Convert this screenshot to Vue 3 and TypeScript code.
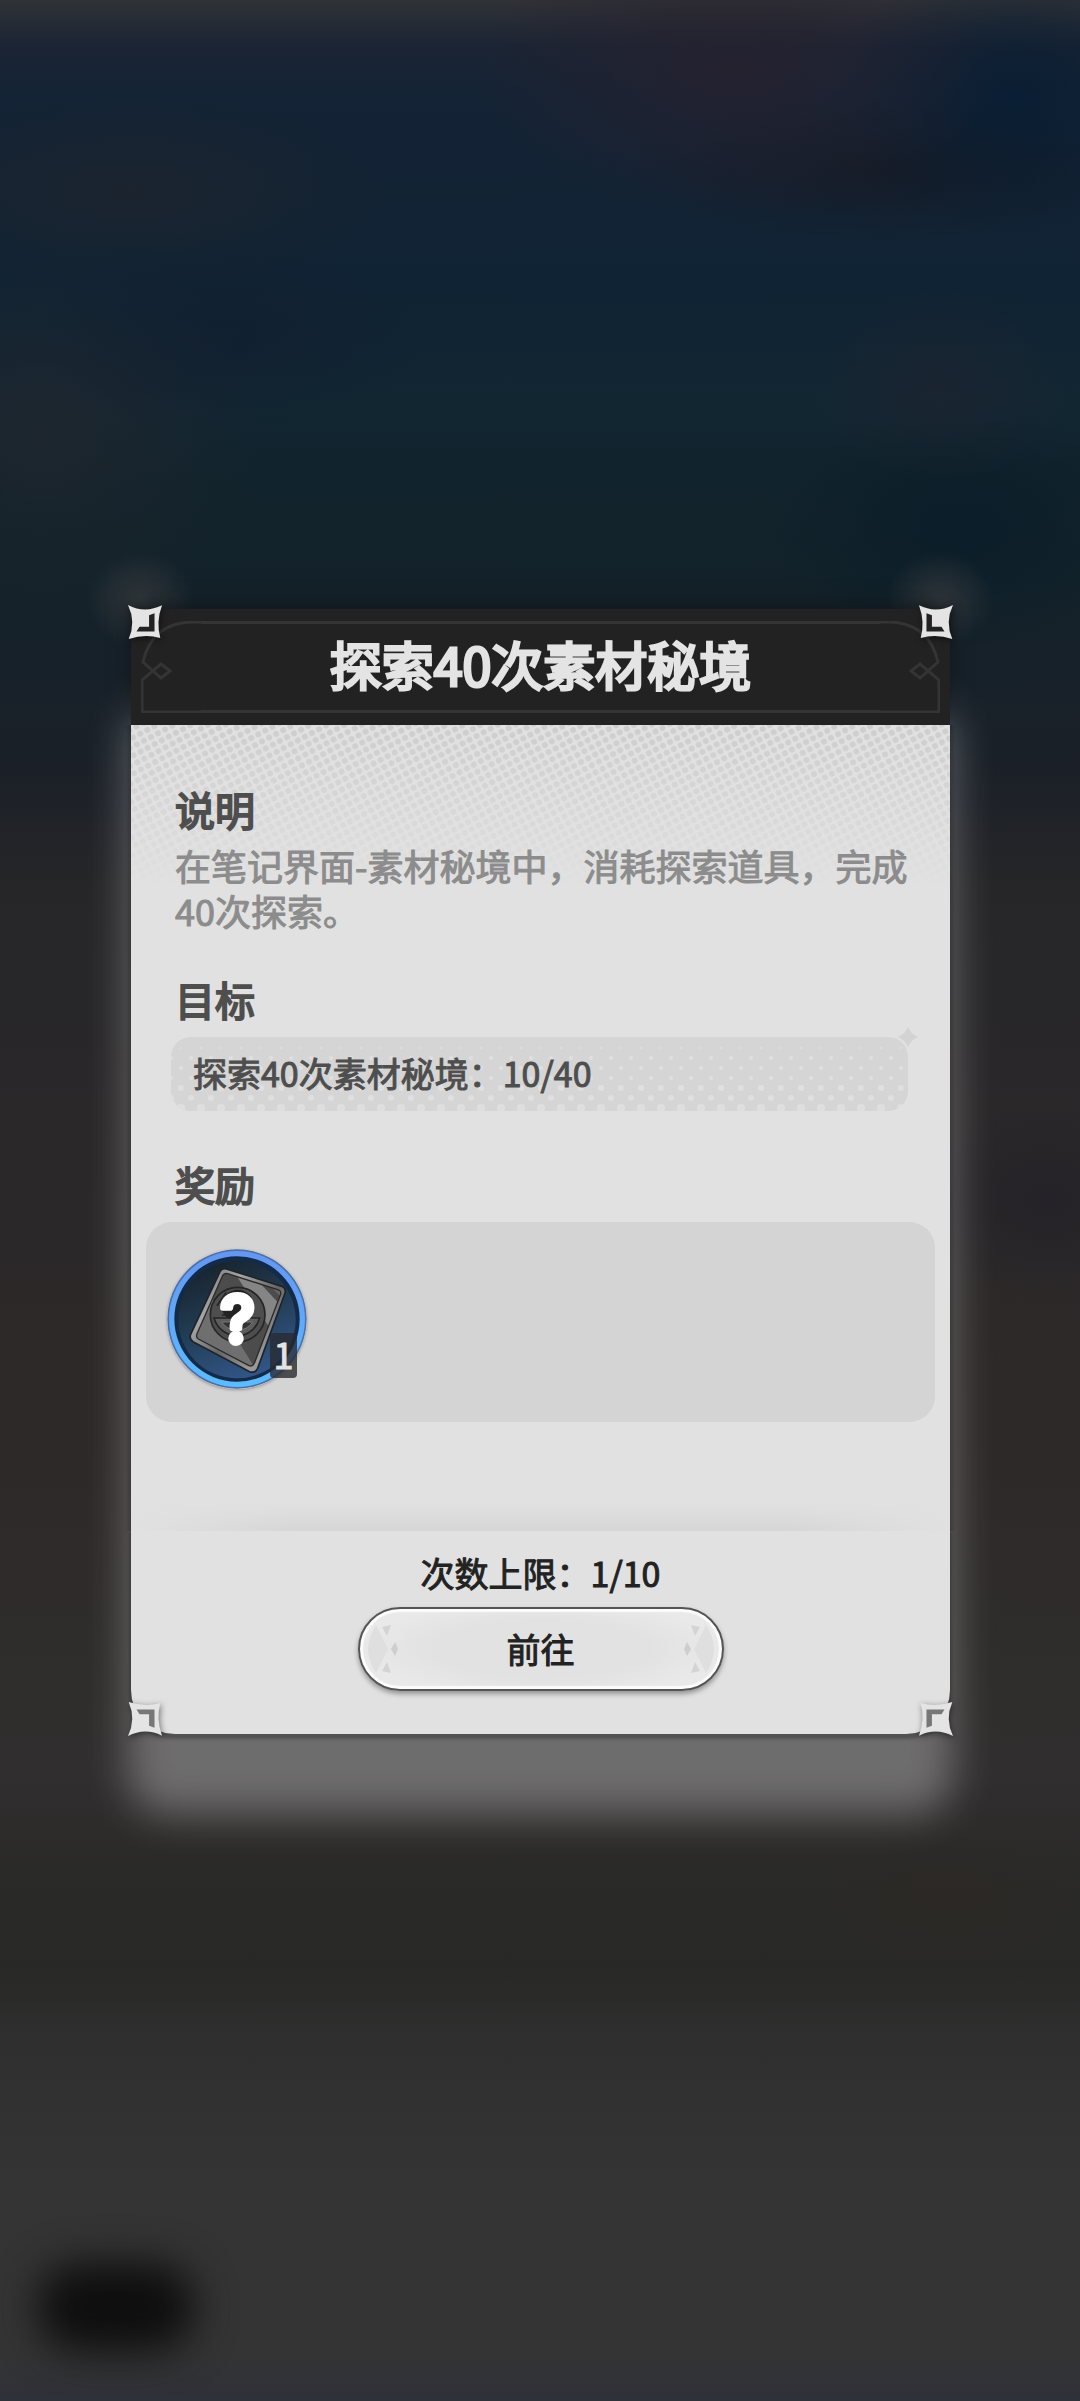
<script setup lang="ts">
interface Corner {
  id: string
  flip: string
}

const corners: Corner[] = [
  { id: 'top-left', flip: '' },
  { id: 'top-right', flip: 'translate(100 0) scale(-1 1)' },
  { id: 'bottom-left', flip: 'translate(0 100) scale(1 -1)' },
  { id: 'bottom-right', flip: 'translate(100 100) scale(-1 -1)' },
]

const task = {
  title: '探索40次素材秘境',
  description: '在笔记界面-素材秘境中，消耗探索道具，完成40次探索。',
  progress: '探索40次素材秘境：10/40',
  limit: '次数上限：1/10',
  rewardCount: 1,
}

// Rows of the goal bar's dots; they grow toward the bottom edge.
const dotRows = [1, 2, 2, 2, 3, 3, 4].map((radius, index) => ({
  id: `goal-dots-${index}`,
  y: 6 + index * 10,
  shift: index % 2 === 0 ? 0 : 10,
  radius,
}))
</script>

<template>
  <main class="screen">
    <div class="backdrop" aria-hidden="true"><i class="pill"></i></div>
    <section class="dialog" aria-labelledby="task-title">
      <div class="glow" aria-hidden="true"></div>
      <header class="header">
        <div class="frame" aria-hidden="true">
          <svg class="frame-end" viewBox="0 0 60 92">
            <path d="M60 1H53C24 1 8 15 2 41L20 57L29 50L20 43L1 59V91H60" />
          </svg>
          <div class="frame-line"></div>
          <svg class="frame-end mirrored" viewBox="0 0 60 92">
            <path d="M60 1H53C24 1 8 15 2 41L20 57L29 50L20 43L1 59V91H60" />
          </svg>
        </div>
        <h1 id="task-title">{{ task.title }}</h1>
      </header>

      <div class="body">
        <svg class="halftone" aria-hidden="true">
          <defs>
            <pattern id="halftone-dots" width="8" height="8" patternUnits="userSpaceOnUse" patternTransform="rotate(-28)">
              <circle cx="4" cy="4" r="3" fill="#cdcdcd" />
            </pattern>
          </defs>
          <rect width="100%" height="100%" fill="url(#halftone-dots)" />
        </svg>

        <section class="block about">
          <h2>说明</h2>
          <p>{{ task.description }}</p>
        </section>

        <section class="block goal">
          <h2>目标</h2>
          <div class="goal-bar">
            <svg class="goal-dots" aria-hidden="true">
              <defs>
                <pattern
                  v-for="row in dotRows"
                  :id="row.id"
                  :key="row.id"
                  :x="row.shift"
                  :y="row.y"
                  width="20"
                  height="10"
                  patternUnits="userSpaceOnUse"
                >
                  <circle cx="10" cy="5" :r="row.radius" fill="#dfdfdf" />
                </pattern>
              </defs>
              <rect
                v-for="row in dotRows"
                :key="row.id"
                :y="row.y"
                width="100%"
                height="10"
                :fill="`url(#${row.id})`"
              />
            </svg>
            <span>{{ task.progress }}</span>
            <svg class="sparkle" viewBox="0 0 20 20" aria-hidden="true">
              <path d="M10 0Q13 7 20 10Q13 13 10 20Q7 13 0 10Q7 7 10 0Z" fill="#d3d3d3" />
            </svg>
          </div>
        </section>

        <section class="block reward">
          <h2>奖励</h2>
          <div class="reward-tray">
            <div class="item">
              <svg viewBox="0 0 420 420" role="img" aria-label="随机卡牌">
                <defs>
                  <linearGradient id="ring" x1="0" y1="0" x2="0" y2="1">
                    <stop offset="0" stop-color="#6496f2" />
                    <stop offset="1" stop-color="#5bbcff" />
                  </linearGradient>
                  <linearGradient id="disc" x1="0.2" y1="0" x2="0.6" y2="1">
                    <stop offset="0" stop-color="#17222b" />
                    <stop offset="0.45" stop-color="#213a50" />
                    <stop offset="1" stop-color="#315687" />
                  </linearGradient>
                  <linearGradient id="rim" x1="0" y1="0" x2="1" y2="1">
                    <stop offset="0" stop-color="#6b6b6b" />
                    <stop offset="0.3" stop-color="#a5a5a5" />
                    <stop offset="0.55" stop-color="#666" />
                    <stop offset="0.8" stop-color="#9a9a9a" />
                    <stop offset="1" stop-color="#777" />
                  </linearGradient>
                  <clipPath id="face">
                    <path d="M182 74L336 123Q343 127 341 136L262 343Q257 354 246 350L94 270Q86 265 90 254L166 82Q171 71 182 74Z" />
                  </clipPath>
                </defs>
                <circle cx="210" cy="210" r="209" fill="#4d6fa8" />
                <circle cx="210" cy="210" r="204" fill="url(#ring)" />
                <circle cx="210" cy="210" r="188" fill="#132a49" />
                <circle cx="210" cy="212" r="176" fill="url(#disc)" />
                <path
                  d="M178 60L345 112Q358 118 354 132L272 358Q264 374 248 368L78 278Q66 270 71 256L158 70Q165 56 178 60Z"
                  fill="url(#rim)"
                  stroke="#20242a"
                  stroke-width="5"
                />
                <g clip-path="url(#face)">
                  <path d="M0 0H420V420H0Z" fill="#4c4c4c" />
                  <path d="M196 60L240 60L360 190L310 240Z" fill="#858585" />
                  <path d="M250 60L360 110L350 150Z" fill="#666" />
                  <path d="M60 270L130 140L290 400H230Z" fill="#6f6f6f" />
                  <path d="M60 220L110 300L230 400L150 390Z" fill="#454545" />
                </g>
                <path
                  d="M182 74L336 123Q343 127 341 136L262 343Q257 354 246 350L94 270Q86 265 90 254L166 82Q171 71 182 74Z"
                  fill="none"
                  stroke="#2b2b2b"
                  stroke-width="4"
                />
                <circle cx="212" cy="197" r="82" fill="#4e4e4e" stroke="#262626" stroke-width="5" />
                <circle cx="212" cy="170" r="48" fill="#222" />
                <path d="M141 207H278Q262 258 208 262Q154 252 141 207Z" fill="#5d5d5d" stroke="#262626" stroke-width="5" />
                <path d="M164 219H257Q242 243 209 245Q178 241 164 219Z" fill="#333" stroke="#777" stroke-width="3" />
                <path d="M150 170L178 130M165 185H190M165 198H186" stroke="#262626" stroke-width="5" fill="none" />
                <text class="mystery" x="212" y="281" text-anchor="middle">?</text>
              </svg>
              <span class="count">{{ task.rewardCount }}</span>
            </div>
          </div>
        </section>
        <div class="fold" aria-hidden="true"></div>
      </div>

      <footer class="footer">
        <p>{{ task.limit }}</p>
        <button type="button" class="go">
          <svg class="cross" viewBox="0 0 40 60" aria-hidden="true">
            <path d="M10 6L22 30L10 54Q-6 30 10 6Z" fill="#dfdfdf" />
            <path d="M16 8L25 6L21 17ZM16 52L25 54L21 43Z" fill="#d4d4d4" />
            <path d="M25 30L29 23L32 30L29 37Z" fill="#cecece" />
          </svg>
          <span>前往</span>
          <svg class="cross mirrored" viewBox="0 0 40 60" aria-hidden="true">
            <path d="M10 6L22 30L10 54Q-6 30 10 6Z" fill="#dfdfdf" />
            <path d="M16 8L25 6L21 17ZM16 52L25 54L21 43Z" fill="#d4d4d4" />
            <path d="M25 30L29 23L32 30L29 37Z" fill="#cecece" />
          </svg>
        </button>
      </footer>

      <svg
        v-for="corner in corners"
        :key="corner.id"
        class="corner"
        :class="corner.id"
        viewBox="0 0 100 100"
        aria-hidden="true"
      >
        <g :transform="corner.flip">
          <path d="M0 0Q50 26 100 1Q82 50 95 97Q50 84 2 100Q24 50 0 0Z" fill="#e4e4e4" />
          <path class="notch" d="M78 24V78H25L34 64H62V30Z" />
        </g>
      </svg>
    </section>
  </main>
</template>

<style>
body {
  margin: 0;
  background: #333;
}
</style>

<style scoped>
.screen {
  position: relative;
  display: flex;
  align-items: center;
  box-sizing: border-box;
  min-height: 100vh;
  padding: 0 130px 58px 131px;
  overflow: hidden;
  font-family: "Noto Sans CJK SC", "Noto Sans", sans-serif;
  font-weight: 400;
}

.backdrop {
  position: absolute;
  inset: 0;
  background:
    radial-gradient(ellipse 5% 2% at 13% 25%, rgba(62, 64, 66, 0.7), transparent),
    radial-gradient(ellipse 5% 2% at 87% 25%, rgba(62, 64, 66, 0.7), transparent),
    radial-gradient(ellipse 24% 6% at 68% 3%, rgba(40, 33, 46, 0.8), transparent),
    radial-gradient(ellipse 16% 6% at 94% 4%, rgba(6, 28, 50, 0.7), transparent),
    radial-gradient(ellipse 24% 3% at 82% 7%, rgba(22, 25, 35, 0.8), transparent),
    radial-gradient(ellipse 24% 4% at 12% 8%, rgba(31, 36, 44, 0.7), transparent),
    radial-gradient(ellipse 18% 4% at 21% 14%, rgba(18, 29, 46, 0.6), transparent),
    radial-gradient(ellipse 12% 4% at 87% 16%, rgba(32, 36, 48, 0.6), transparent),
    radial-gradient(ellipse 18% 5% at 89% 22%, rgba(9, 28, 40, 0.8), transparent),
    radial-gradient(ellipse 20% 8% at 4% 18%, rgba(32, 38, 46, 0.8), transparent),
    radial-gradient(ellipse 12% 4% at 97% 50%, rgba(34, 32, 40, 0.7), transparent),
    radial-gradient(ellipse 12% 3% at 88% 79%, rgba(46, 40, 34, 0.6), transparent),
    linear-gradient(
      #303236 0,
      #1a2434 2%,
      #142335 4%,
      #102334 12%,
      #122632 17%,
      #11232c 20%,
      #13222a 24%,
      #1b2028 32%,
      #262628 37%,
      #2b2829 50%,
      #2e2929 60%,
      #302e2e 74%,
      #292928 79%,
      #282827 82%,
      #302f2f 85%,
      #343434 91%,
      #343434 98%,
      #2e3138 100%
    );
}

.pill {
  position: absolute;
  left: 38px;
  bottom: 50px;
  width: 156px;
  height: 88px;
  border-radius: 40px;
  background: #0e0e0e;
  filter: blur(20px);
}

.dialog {
  position: relative;
  flex: 1;
  min-width: 0;
}

.glow {
  position: absolute;
  inset: 90px -4px -80px;
  border-radius: 40px;
  background: rgba(255, 255, 255, 0.3);
  filter: blur(20px);
}

.header {
  position: relative;
  display: flex;
  align-items: center;
  justify-content: center;
  height: 116px;
  box-sizing: border-box;
  padding-bottom: 6px;
  background: #222;
  box-shadow: 0 -4px 18px rgba(14, 16, 18, 0.6);
}

.frame {
  position: absolute;
  inset: 12px 10px;
  display: flex;
}

.frame-end {
  width: 60px;
  height: 92px;
  fill: none;
  stroke: #343434;
  stroke-width: 3;
}

.frame-line {
  flex: 1;
  height: 92px;
  box-sizing: border-box;
  border-top: 3px solid #343434;
  border-bottom: 3px solid #343434;
}

.mirrored {
  transform: scaleX(-1);
}

h1,
h2,
p {
  margin: 0;
}

h1 {
  position: relative;
  color: #e4e4e4;
  font-size: 52px;
  font-weight: 400;
  line-height: 76px;
  -webkit-text-stroke: 3px #e4e4e4;
}

.body {
  position: relative;
  padding-top: 60px;
  background: #e1e1e1;
  box-shadow: 0 0 3px 3px rgba(20, 20, 20, 0.3);
  clip-path: inset(0 -8px);
}

.halftone {
  position: absolute;
  top: 0;
  left: 0;
  width: 100%;
  height: 160px;
  mask-image: linear-gradient(#000, transparent);
}

.block {
  position: relative;
}

h2 {
  padding-left: 44px;
  color: #4e4e4e;
  font-size: 40px;
  font-weight: 400;
  line-height: 48px;
  -webkit-text-stroke: 2px #4e4e4e;
}

.about p {
  padding: 10px 40px 0 44px;
  color: #8c8c8c;
  font-size: 36px;
  line-height: 45px;
  -webkit-text-stroke: 1px #8c8c8c;
}

.goal {
  margin-top: 42px;
}

.goal-bar {
  position: relative;
  display: flex;
  align-items: center;
  height: 74px;
  box-sizing: border-box;
  margin: 14px 42px 0 40px;
  padding: 0 22px 4px;
  border-radius: 20px;
  background: #d5d5d5;
  color: #4e4e4e;
  font-size: 34px;
  -webkit-text-stroke: 1px #4e4e4e;
}

.goal-bar span {
  position: relative;
}

.goal-dots {
  position: absolute;
  top: 0;
  left: 0;
  width: 100%;
  height: 100%;
  border-radius: 20px;
}

.sparkle {
  position: absolute;
  top: -10px;
  right: -10px;
  width: 20px;
  height: 20px;
}

.reward {
  margin-top: 49px;
}

.reward-tray {
  display: flex;
  height: 200px;
  box-sizing: border-box;
  margin: 14px 15px 0;
  padding: 27px 21px;
  border-radius: 26px;
  background: #d4d4d4;
}

.item {
  position: relative;
  width: 140px;
  height: 140px;
}

.item svg {
  display: block;
  border-radius: 50%;
  box-shadow: 0 1px 3px rgba(0, 0, 0, 0.3);
}

.mystery {
  fill: #fff;
  stroke: #fff;
  stroke-width: 18px;
  stroke-linejoin: round;
  font-family: Inter, sans-serif;
  font-size: 194px;
  font-weight: 500;
}

.count {
  position: absolute;
  right: 10px;
  bottom: 11px;
  width: 27px;
  height: 45px;
  border-radius: 4px;
  background: rgba(40, 43, 48, 0.8);
  color: #e4e4e4;
  font-size: 36px;
  line-height: 41px;
  text-align: center;
  -webkit-text-stroke: 1px #e4e4e4;
}

.fold {
  height: 28px;
  margin-top: 81px;
  background:
    linear-gradient(90deg, #e1e1e1, rgba(225, 225, 225, 0) 20% 80%, #e1e1e1),
    linear-gradient(#e1e1e1, #d6d6d6);
}

.footer {
  position: relative;
  display: flex;
  flex-direction: column;
  align-items: center;
  gap: 10px;
  padding: 18px 0 43px;
  border-radius: 0 0 44px 44px;
  background: #e1e1e1;
  box-shadow: 0 3px 3px 2px rgba(20, 20, 20, 0.3);
  clip-path: inset(0 -8px -10px);
  color: #222;
  font-size: 34px;
  line-height: 48px;
}

.footer p {
  -webkit-text-stroke: 1px #222;
}

.go {
  display: flex;
  align-items: center;
  justify-content: space-between;
  width: 366px;
  height: 84px;
  box-sizing: border-box;
  padding: 0 6px;
  border: 2px solid #555;
  border-radius: 42px;
  background: radial-gradient(ellipse 50% 60%, #e2e2e2 60%, #e9e9e9);
  box-shadow:
    inset 0 0 1px 3px #fcfcfc,
    0 3px 5px rgba(0, 0, 0, 0.35);
  color: #222;
  font: inherit;
  -webkit-text-stroke: 1px #222;
}

.cross {
  width: 40px;
  height: 60px;
}

.corner {
  position: absolute;
  width: 34px;
  height: 34px;
  filter: drop-shadow(1px 2px 3px rgba(0, 0, 0, 0.5));
}

.top-left,
.top-right {
  top: -4px;
}

.bottom-left,
.bottom-right {
  bottom: -2px;
}

.top-left,
.bottom-left {
  left: -3px;
}

.top-right,
.bottom-right {
  right: -3px;
}

.notch {
  fill: #222;
}

.bottom-left .notch,
.bottom-right .notch {
  fill: #777;
}
</style>
